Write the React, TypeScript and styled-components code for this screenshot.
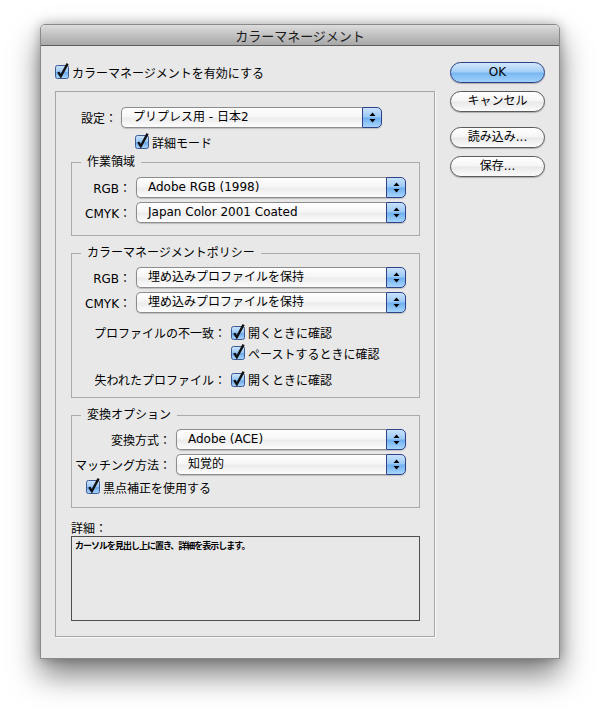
import React from 'react';
import styled, { createGlobalStyle } from 'styled-components';

const GlobalStyle = createGlobalStyle`
  html, body { margin: 0; padding: 0; background: #ffffff; }
  body {
    font-family: "DejaVu Sans", "Noto Sans CJK JP", sans-serif;
    font-size: 12px;
    color: #000;
  }
  * { box-sizing: border-box; }
`;

const Page = styled.div`
  padding: 24px 40px 55px 40px;
  width: 600px;
`;

const Window = styled.div`
  width: 520px;
  background: #e8e8e8;
  border: 1px solid #8a8a8a;
  border-radius: 5px 5px 0 0;
  box-shadow: 0 16px 30px rgba(0, 0, 0, 0.5), 0 0 12px rgba(0, 0, 0, 0.28);
`;

const TitleBar = styled.div`
  height: 21px;
  border-bottom: 1px solid #5c5c5c;
  border-radius: 4px 4px 0 0;
  background: linear-gradient(#dcdcdc, #a8a8a8);
  display: flex;
  align-items: center;
  justify-content: center;
  font-size: 13px;
  color: #1a1a1a;
`;

const Body = styled.div`
  display: flex;
  gap: 15px;
  padding: 15px 14px 21px 14px;
`;

const LeftCol = styled.div`
  width: 380px;
  padding-top: 3px;
  display: flex;
  flex-direction: column;
`;

const ButtonCol = styled.div`
  width: 95px;
  padding-top: 1px;
  display: flex;
  flex-direction: column;
`;

const PushButton = styled.button<{ $primary?: boolean; $gap: number }>`
  width: 95px;
  height: 21px;
  margin-top: ${(p) => p.$gap}px;
  padding: 0;
  border-radius: 11px;
  border: 1px solid ${(p) => (p.$primary ? '#2a3f85' : '#5a5a5a')};
  background: ${(p) =>
    p.$primary
      ? 'linear-gradient(#d2e8fc 0%, #a3cef7 48%, #78b6f1 52%, #9fd2fb 100%)'
      : 'linear-gradient(#ffffff 0%, #f5f5f5 48%, #e8e8e8 52%, #fbfbfb 100%)'};
  box-shadow: 0 1px 1px rgba(0, 0, 0, 0.25);
  font-family: "DejaVu Sans", "Noto Sans CJK JP", sans-serif;
  font-size: 12px;
  color: #000;
  line-height: 19px;
`;

const CheckRow = styled.div<{ $indent?: number; $top?: number }>`
  display: flex;
  align-items: center;
  height: 16px;
  margin-left: ${(p) => p.$indent ?? 0}px;
  margin-top: ${(p) => p.$top ?? 0}px;
  gap: 3px;
  white-space: nowrap;
`;

const Panel = styled.div`
  margin-top: 11px;
  border: 1px solid #a6a6a6;
  box-shadow: 1px 1px 0 #fafafa;
  padding: 15px 14px 15px 15px;
  display: flex;
  flex-direction: column;
`;

const SettingRow = styled.div`
  display: flex;
  align-items: center;
  gap: 4px;
  margin-left: 10px;
`;

const Label = styled.span<{ $w: number }>`
  width: ${(p) => p.$w}px;
  text-align: right;
  white-space: nowrap;
  flex-shrink: 0;
`;

const Group = styled.fieldset<{ $top: number; $pt: number; $pb: number }>`
  margin: ${(p) => p.$top}px 0 0 0;
  padding: ${(p) => p.$pt}px 13px ${(p) => p.$pb}px 0;
  border: 1px solid #aaaaaa;
  min-width: 0;
  display: flex;
  flex-direction: column;
`;

const Legend = styled.legend`
  margin-left: 9px;
  padding: 0 6px;
  line-height: 16px;
  font-size: 12px;
`;

const FieldRow = styled.div<{ $top?: number }>`
  display: flex;
  align-items: center;
  gap: 5px;
  margin-top: ${(p) => p.$top ?? 0}px;
`;

const PopupWrap = styled.div<{ $w?: number }>`
  display: flex;
  height: 21px;
  width: ${(p) => (p.$w ? `${p.$w}px` : 'auto')};
  flex: ${(p) => (p.$w ? '0 0 auto' : '1')};
  box-shadow: 0 1px 1px rgba(0, 0, 0, 0.18);
  border-radius: 5px;
`;

const PopupBody = styled.div`
  flex: 1;
  border: 1px solid #8c8c8c;
  border-right: none;
  border-radius: 5px 0 0 5px;
  background: linear-gradient(#ffffff 0%, #f6f6f6 45%, #ececec 55%, #fdfdfd 100%);
  padding-left: 11px;
  line-height: 19px;
  white-space: nowrap;
  overflow: hidden;
`;

const PopupArrow = styled.div`
  width: 20px;
  border: 1px solid #2f428a;
  border-radius: 0 5px 5px 0;
  background: linear-gradient(#c8e2fb 0%, #9bc9f6 48%, #6eaef0 52%, #a8d6fc 100%);
  display: flex;
  align-items: center;
  justify-content: center;
`;

const DetailLabel = styled.div`
  margin-top: 14px;
  line-height: 14px;
  height: 14px;
`;

const DetailBox = styled.div`
  height: 85px;
  border: 1px solid #4e4e4e;
  padding: 3px 3px;
  font-size: 9px;
  font-weight: 700;
  line-height: 12px;
  letter-spacing: -1px;
  color: #000;
`;

const Check = () => (
  <svg width="14" height="14" viewBox="0 0 14 14" style={{ overflow: 'visible', flexShrink: 0 }}>
    <defs>
      <linearGradient id="cbg" x1="0" y1="0" x2="0" y2="1">
        <stop offset="0" stopColor="#cfe6fc" />
        <stop offset="0.5" stopColor="#97c6f4" />
        <stop offset="0.52" stopColor="#6da9ec" />
        <stop offset="1" stopColor="#a9d5fb" />
      </linearGradient>
    </defs>
    <rect x="0.5" y="0.5" width="13" height="13" rx="2" fill="url(#cbg)" stroke="#3d5a92" />
    <path d="M3.2 7.2 L5.8 11.2 L12.6 -1.4" fill="none" stroke="#111" strokeWidth="2.4" strokeLinejoin="miter" />
  </svg>
);

const Arrows = () => (
  <svg width="7" height="11" viewBox="0 0 7 11">
    <path d="M3.5 0.5 L6.5 4 L0.5 4 Z" fill="#000" />
    <path d="M0.5 7 L6.5 7 L3.5 10.5 Z" fill="#000" />
  </svg>
);

const Popup = ({ value, w }: { value: string; w?: number }) => (
  <PopupWrap $w={w}>
    <PopupBody>{value}</PopupBody>
    <PopupArrow>
      <Arrows />
    </PopupArrow>
  </PopupWrap>
);

export default function App() {
  return (
    <>
      <GlobalStyle />
      <Page>
        <Window>
          <TitleBar>カラーマネージメント</TitleBar>
          <Body>
            <LeftCol>
              <CheckRow>
                <Check />
                <span>カラーマネージメントを有効にする</span>
              </CheckRow>
              <Panel>
                <SettingRow>
                  <Label $w={36}>設定：</Label>
                  <Popup value="プリプレス用 - 日本2" w={261} />
                </SettingRow>
                <CheckRow $indent={64} $top={6}>
                  <Check />
                  <span>詳細モード</span>
                </CheckRow>

                <Group $top={4} $pt={7} $pb={12}>
                  <Legend>作業領域</Legend>
                  <FieldRow>
                    <Label $w={59}>RGB：</Label>
                    <Popup value="Adobe RGB (1998)" />
                  </FieldRow>
                  <FieldRow $top={4}>
                    <Label $w={59}>CMYK：</Label>
                    <Popup value="Japan Color 2001 Coated" />
                  </FieldRow>
                </Group>

                <Group $top={9} $pt={6} $pb={9}>
                  <Legend>カラーマネージメントポリシー</Legend>
                  <FieldRow>
                    <Label $w={59}>RGB：</Label>
                    <Popup value="埋め込みプロファイルを保持" />
                  </FieldRow>
                  <FieldRow $top={4}>
                    <Label $w={59}>CMYK：</Label>
                    <Popup value="埋め込みプロファイルを保持" />
                  </FieldRow>
                  <FieldRow $top={11}>
                    <Label $w={154}>プロファイルの不一致：</Label>
                    <CheckRow>
                      <Check />
                      <span>開くときに確認</span>
                    </CheckRow>
                  </FieldRow>
                  <FieldRow $top={4}>
                    <Label $w={154}></Label>
                    <CheckRow>
                      <Check />
                      <span>ペーストするときに確認</span>
                    </CheckRow>
                  </FieldRow>
                  <FieldRow $top={10}>
                    <Label $w={154}>失われたプロファイル：</Label>
                    <CheckRow>
                      <Check />
                      <span>開くときに確認</span>
                    </CheckRow>
                  </FieldRow>
                </Group>

                <Group $top={9} $pt={6} $pb={12}>
                  <Legend>変換オプション</Legend>
                  <FieldRow>
                    <Label $w={99}>変換方式：</Label>
                    <Popup value="Adobe (ACE)" />
                  </FieldRow>
                  <FieldRow $top={4}>
                    <Label $w={99}>マッチング方法：</Label>
                    <Popup value="知覚的" />
                  </FieldRow>
                  <CheckRow $indent={14} $top={4}>
                    <Check />
                    <span>黒点補正を使用する</span>
                  </CheckRow>
                </Group>

                <DetailLabel>詳細：</DetailLabel>
                <DetailBox>カーソルを見出し上に置き、詳細を表示します。</DetailBox>
              </Panel>
            </LeftCol>
            <ButtonCol>
              <PushButton $primary $gap={0}>OK</PushButton>
              <PushButton $gap={8}>キャンセル</PushButton>
              <PushButton $gap={15}>読み込み...</PushButton>
              <PushButton $gap={8}>保存...</PushButton>
            </ButtonCol>
          </Body>
        </Window>
      </Page>
    </>
  );
}
